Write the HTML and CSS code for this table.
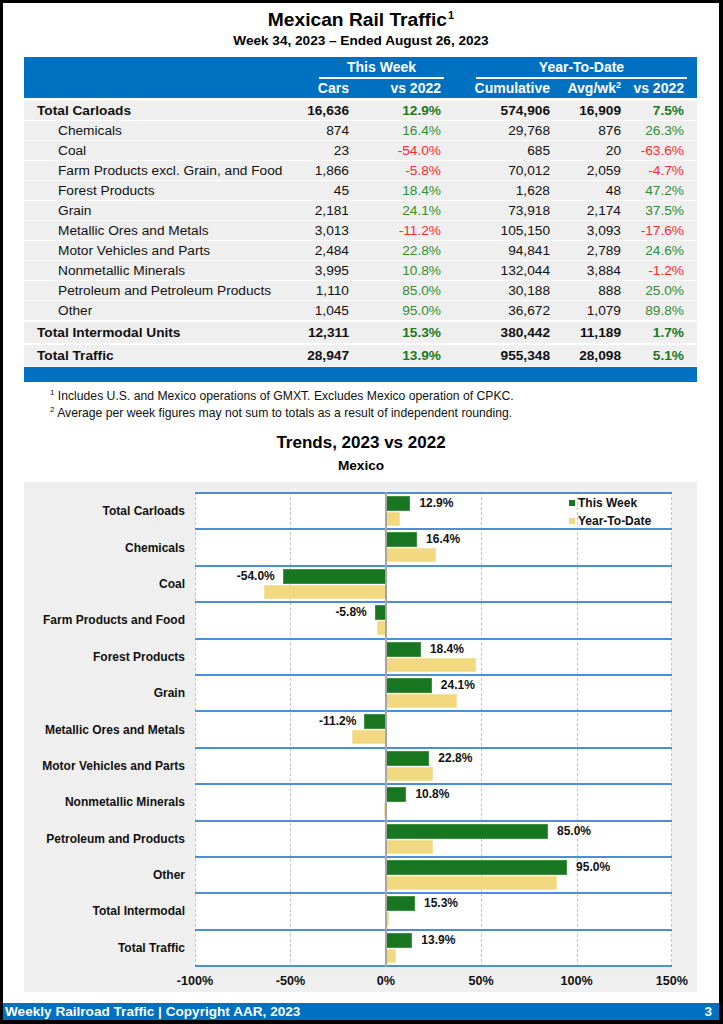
FILE: index.html
```html
<!DOCTYPE html>
<html lang="en">
<head>
<meta charset="utf-8">
<title>Mexican Rail Traffic</title>
<link rel="stylesheet" href="styles.css">
</head>
<body>
<div class="page">
  <header class="title-block">
    <h1 class="title">Mexican Rail Traffic<sup>1</sup></h1>
    <p class="subtitle">Week 34, 2023 – Ended August 26, 2023</p>
  </header>

  <section class="table">
    <div class="thead">
      <div class="hrow hrow1">
        <div class="grp grp-week">This Week</div>
        <div class="grp grp-ytd">Year-To-Date</div>
      </div>
      <div class="hrow hrow2">
        <div></div>
        <div class="num">Cars</div>
        <div class="num">vs 2022</div>
        <div class="num">Cumulative</div>
        <div class="num">Avg/wk<sup>2</sup></div>
        <div class="num">vs 2022</div>
      </div>
    </div>
    <div class="trow total first"><div class="lbl">Total Carloads</div><div class="num">16,636</div><div class="num pos">12.9%</div><div class="num">574,906</div><div class="num">16,909</div><div class="num pos">7.5%</div></div>
    <div class="trow"><div class="lbl">Chemicals</div><div class="num">874</div><div class="num pos">16.4%</div><div class="num">29,768</div><div class="num">876</div><div class="num pos">26.3%</div></div>
    <div class="trow"><div class="lbl">Coal</div><div class="num">23</div><div class="num neg">-54.0%</div><div class="num">685</div><div class="num">20</div><div class="num neg">-63.6%</div></div>
    <div class="trow"><div class="lbl">Farm Products excl. Grain, and Food</div><div class="num">1,866</div><div class="num neg">-5.8%</div><div class="num">70,012</div><div class="num">2,059</div><div class="num neg">-4.7%</div></div>
    <div class="trow"><div class="lbl">Forest Products</div><div class="num">45</div><div class="num pos">18.4%</div><div class="num">1,628</div><div class="num">48</div><div class="num pos">47.2%</div></div>
    <div class="trow"><div class="lbl">Grain</div><div class="num">2,181</div><div class="num pos">24.1%</div><div class="num">73,918</div><div class="num">2,174</div><div class="num pos">37.5%</div></div>
    <div class="trow"><div class="lbl">Metallic Ores and Metals</div><div class="num">3,013</div><div class="num neg">-11.2%</div><div class="num">105,150</div><div class="num">3,093</div><div class="num neg">-17.6%</div></div>
    <div class="trow"><div class="lbl">Motor Vehicles and Parts</div><div class="num">2,484</div><div class="num pos">22.8%</div><div class="num">94,841</div><div class="num">2,789</div><div class="num pos">24.6%</div></div>
    <div class="trow"><div class="lbl">Nonmetallic Minerals</div><div class="num">3,995</div><div class="num pos">10.8%</div><div class="num">132,044</div><div class="num">3,884</div><div class="num neg">-1.2%</div></div>
    <div class="trow"><div class="lbl">Petroleum and Petroleum Products</div><div class="num">1,110</div><div class="num pos">85.0%</div><div class="num">30,188</div><div class="num">888</div><div class="num pos">25.0%</div></div>
    <div class="trow"><div class="lbl">Other</div><div class="num">1,045</div><div class="num pos">95.0%</div><div class="num">36,672</div><div class="num">1,079</div><div class="num pos">89.8%</div></div>
    <div class="trow total big"><div class="lbl">Total Intermodal Units</div><div class="num">12,311</div><div class="num pos">15.3%</div><div class="num">380,442</div><div class="num">11,189</div><div class="num pos">1.7%</div></div>
    <div class="trow total big"><div class="lbl">Total Traffic</div><div class="num">28,947</div><div class="num pos">13.9%</div><div class="num">955,348</div><div class="num">28,098</div><div class="num pos">5.1%</div></div>
    <div class="tfoot"></div>
  </section>

  <section class="notes">
    <p><sup>1</sup> Includes U.S. and Mexico operations of GMXT. Excludes Mexico operation of CPKC.</p>
    <p><sup>2</sup> Average per week figures may not sum to totals as a result of independent rounding.</p>
  </section>

  <h2 class="chart-title">Trends, 2023 vs 2022</h2>
  <p class="chart-sub">Mexico</p>

  <section class="chart-panel">
    <div class="chart-body">
      <div class="labels">
        <div class="clabel">Total Carloads</div>
        <div class="clabel">Chemicals</div>
        <div class="clabel">Coal</div>
        <div class="clabel">Farm Products and Food</div>
        <div class="clabel">Forest Products</div>
        <div class="clabel">Grain</div>
        <div class="clabel">Metallic Ores and Metals</div>
        <div class="clabel">Motor Vehicles and Parts</div>
        <div class="clabel">Nonmetallic Minerals</div>
        <div class="clabel">Petroleum and Products</div>
        <div class="clabel">Other</div>
        <div class="clabel">Total Intermodal</div>
        <div class="clabel">Total Traffic</div>
      </div>
      <div class="plot">
        <div class="gl dashed" style="left:0%"></div>
        <div class="gl dashed" style="left:20%"></div>
        <div class="gl dashed" style="left:60%"></div>
        <div class="gl dashed" style="left:80%"></div>
        <div class="gl dashed" style="left:calc(100% - 1px)"></div>
        <div class="gl zero" style="left:40%"></div>

        <div class="band">
          <div class="bar tw" style="left:40%;width:5.16%"></div>
          <div class="bar ytd" style="left:40%;width:3%"></div>
          <div class="vlabel" style="left:calc(45.16% + 9px)">12.9%</div>
        </div>
        <div class="band">
          <div class="bar tw" style="left:40%;width:6.56%"></div>
          <div class="bar ytd" style="left:40%;width:10.52%"></div>
          <div class="vlabel" style="left:calc(46.56% + 9px)">16.4%</div>
        </div>
        <div class="band">
          <div class="bar tw" style="left:18.4%;width:21.6%"></div>
          <div class="bar ytd" style="left:14.56%;width:25.44%"></div>
          <div class="vlabel" style="right:calc(81.6% + 8px)">-54.0%</div>
        </div>
        <div class="band">
          <div class="bar tw" style="left:37.68%;width:2.32%"></div>
          <div class="bar ytd" style="left:38.12%;width:1.88%"></div>
          <div class="vlabel" style="right:calc(62.32% + 8px)">-5.8%</div>
        </div>
        <div class="band">
          <div class="bar tw" style="left:40%;width:7.36%"></div>
          <div class="bar ytd" style="left:40%;width:18.88%"></div>
          <div class="vlabel" style="left:calc(47.36% + 9px)">18.4%</div>
        </div>
        <div class="band">
          <div class="bar tw" style="left:40%;width:9.64%"></div>
          <div class="bar ytd" style="left:40%;width:15%"></div>
          <div class="vlabel" style="left:calc(49.64% + 9px)">24.1%</div>
        </div>
        <div class="band">
          <div class="bar tw" style="left:35.52%;width:4.48%"></div>
          <div class="bar ytd" style="left:32.96%;width:7.04%"></div>
          <div class="vlabel" style="right:calc(64.48% + 8px)">-11.2%</div>
        </div>
        <div class="band">
          <div class="bar tw" style="left:40%;width:9.12%"></div>
          <div class="bar ytd" style="left:40%;width:9.84%"></div>
          <div class="vlabel" style="left:calc(49.12% + 9px)">22.8%</div>
        </div>
        <div class="band">
          <div class="bar tw" style="left:40%;width:4.32%"></div>
          <div class="bar ytd" style="left:39.52%;width:0.48%"></div>
          <div class="vlabel" style="left:calc(44.32% + 9px)">10.8%</div>
        </div>
        <div class="band">
          <div class="bar tw" style="left:40%;width:34%"></div>
          <div class="bar ytd" style="left:40%;width:10%"></div>
          <div class="vlabel" style="left:calc(74% + 9px)">85.0%</div>
        </div>
        <div class="band">
          <div class="bar tw" style="left:40%;width:38%"></div>
          <div class="bar ytd" style="left:40%;width:35.92%"></div>
          <div class="vlabel" style="left:calc(78% + 9px)">95.0%</div>
        </div>
        <div class="band">
          <div class="bar tw" style="left:40%;width:6.12%"></div>
          <div class="bar ytd" style="left:40%;width:0.68%"></div>
          <div class="vlabel" style="left:calc(46.12% + 9px)">15.3%</div>
        </div>
        <div class="band last">
          <div class="bar tw" style="left:40%;width:5.56%"></div>
          <div class="bar ytd" style="left:40%;width:2.04%"></div>
          <div class="vlabel" style="left:calc(45.56% + 9px)">13.9%</div>
        </div>

        <div class="legend">
          <div class="litem"><span class="swatch sw-tw"></span>This Week</div>
          <div class="litem"><span class="swatch sw-ytd"></span>Year-To-Date</div>
        </div>
      </div>
    </div>
    <div class="axis">
      <span>-100%</span><span>-50%</span><span>0%</span><span>50%</span><span>100%</span><span>150%</span>
    </div>
  </section>

  <footer class="footer">
    <span>Weekly Railroad Traffic | Copyright AAR, 2023</span>
    <span>3</span>
  </footer>
</div>
</body>
</html>
```

FILE: styles.css
```css
* { box-sizing: border-box; }

html, body {
  margin: 0;
  padding: 0;
  background: #ffffff;
}

body {
  font-family: "Liberation Sans", Arial, sans-serif;
  color: #111111;
}

.page {
  width: 723px;
  height: 1024px;
  border-style: solid;
  border-color: #000000;
  border-width: 3px 4px 4px 3px;
  background: #ffffff;
  overflow: hidden;
}

/* ---------- titles ---------- */
.title-block {
  padding-top: 6px;
  text-align: center;
}

.title {
  margin: 0;
  font-size: 19.2px;
  line-height: 22px;
  font-weight: bold;
  color: #000;
}

.title sup {
  font-size: 11px;
  line-height: 0;
  vertical-align: 7px;
  margin-left: 1px;
}

.subtitle {
  margin: 1px 0 0;
  font-size: 13.6px;
  line-height: 18px;
  font-weight: bold;
  color: #000;
}

/* ---------- table ---------- */
.table {
  width: 673px;
  margin: 7px 0 0 21px;
  font-size: 13.7px;
}

.thead {
  background: #0070c0;
  color: #ffffff;
  font-weight: bold;
  font-size: 14px;
}

.hrow,
.trow {
  display: grid;
  grid-template-columns: 276px 49px 92px 109px 71px 63px 13px;
}

.hrow1 {
  padding-top: 1px;
}

.grp {
  line-height: 19px;
  text-align: center;
  border-bottom: 2px solid #ffffff;
}

.grp-week {
  grid-column: 2 / 4;
  margin: 0 -3px 0 19px;
}

.grp-ytd {
  grid-column: 4 / 7;
  margin: 0 -3px 0 35px;
}

.hrow2 {
  line-height: 19px;
}

.hrow2 sup {
  font-size: 9px;
  line-height: 0;
  vertical-align: 5px;
}

.num {
  text-align: right;
  white-space: nowrap;
}

.trow {
  background: #efefef;
  height: 19px;
  line-height: 19px;
  margin-top: 1px;
}

.trow.first {
  margin-top: 3px;
}

.trow.big {
  height: 21px;
  line-height: 21px;
  margin-top: 2px;
}

.trow .lbl {
  padding-left: 34px;
  white-space: nowrap;
}

.trow.total {
  font-weight: bold;
}

.trow.total .lbl {
  padding-left: 13px;
}

.pos { color: #2f8f2f; }
.neg { color: #ff2b2b; }
.trow.total .pos { color: #1d7a1d; }

.tfoot {
  height: 15px;
  margin-top: 1px;
  background: #0070c0;
}

/* ---------- notes ---------- */
.notes {
  margin: 6px 0 0 47px;
  font-size: 12.2px;
  color: #111;
}

.notes p {
  margin: 0;
  line-height: 17px;
}

.notes sup {
  font-size: 8px;
  line-height: 0;
  vertical-align: 5px;
}

/* ---------- chart ---------- */
.chart-title {
  margin: 11px 0 0;
  text-align: center;
  font-size: 17px;
  line-height: 20px;
  font-weight: bold;
  color: #000;
}

.chart-sub {
  margin: 4px 0 0;
  text-align: center;
  font-size: 13.6px;
  line-height: 18px;
  font-weight: bold;
  color: #000;
}

.chart-panel {
  width: 673px;
  height: 510px;
  margin: 7px 0 0 21px;
  padding-top: 10px;
  background: #efefef;
}

.chart-body {
  display: grid;
  grid-template-columns: 171px 477px;
}

.labels {
  display: flex;
  flex-direction: column;
}

.clabel {
  height: 36.4px;
  padding: 2px 10px 0 0;
  display: flex;
  align-items: center;
  justify-content: flex-end;
  font-size: 12px;
  font-weight: bold;
  color: #111;
  white-space: nowrap;
}

.plot {
  position: relative;
  background: #ffffff;
  display: flex;
  flex-direction: column;
}

.gl {
  position: absolute;
  top: 0;
  bottom: 0;
  width: 0;
}

.gl.dashed {
  border-left: 1px dashed #c4c4c4;
}

.gl.zero {
  border-left: 2px solid #a6a6a6;
  margin-left: -1px;
  z-index: 2;
}

.band {
  position: relative;
  height: 36.4px;
  border-top: 2px solid #4a8fd8;
}

.band.last {
  height: 38.4px;
  border-bottom: 2px solid #4a8fd8;
}

.bar {
  position: absolute;
  z-index: 1;
}

.bar.tw {
  top: 2px;
  height: 15px;
  background: #17761f;
  border: 1px solid #3f9244;
}

.bar.ytd {
  top: 18px;
  height: 14px;
  background: #f2d87e;
  border: 1px solid #f6e3a3;
}

.vlabel {
  position: absolute;
  top: 2px;
  height: 15px;
  line-height: 15px;
  font-size: 12px;
  font-weight: bold;
  color: #111;
  white-space: nowrap;
  z-index: 3;
}

.legend {
  position: absolute;
  top: 2px;
  left: 374px;
  z-index: 4;
}

.litem {
  display: flex;
  align-items: center;
  height: 18px;
  font-size: 12px;
  font-weight: bold;
  color: #111;
  white-space: nowrap;
}

.swatch {
  width: 6px;
  height: 6px;
  margin-right: 3px;
}

.sw-tw { background: #17761f; }
.sw-ytd { background: #f2d87e; }

.axis {
  display: flex;
  justify-content: space-between;
  width: 517px;
  margin: 6px 0 0 151px;
  line-height: 16px;
  font-size: 12.6px;
  font-weight: bold;
  color: #111;
}

.axis span {
  width: 40px;
  text-align: center;
}

/* ---------- footer ---------- */
.footer {
  display: flex;
  justify-content: space-between;
  height: 17px;
  line-height: 17px;
  margin-top: 11px;
  padding: 0 7px 0 2px;
  background: #0070c0;
  color: #ffffff;
  font-size: 13.6px;
  font-weight: bold;
}
```
